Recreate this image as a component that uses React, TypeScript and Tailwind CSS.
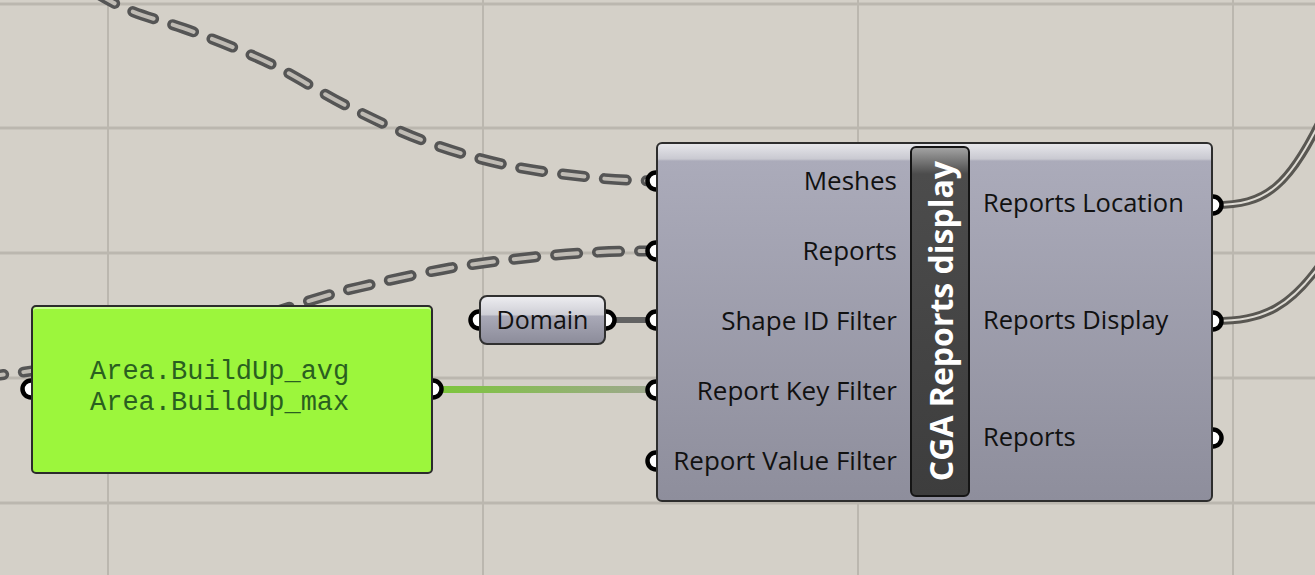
type Pt = [number, number];

// catmull-rom through points -> cubic path
function smooth(pts: Pt[]) {
  let d = `M ${pts[0][0]} ${pts[0][1]}`;
  for (let i = 0; i < pts.length - 1; i++) {
    const p0 = pts[i - 1] || pts[i];
    const p1 = pts[i];
    const p2 = pts[i + 1];
    const p3 = pts[i + 2] || p2;
    const c1x = p1[0] + (p2[0] - p0[0]) / 6;
    const c1y = p1[1] + (p2[1] - p0[1]) / 6;
    const c2x = p2[0] - (p3[0] - p1[0]) / 6;
    const c2y = p2[1] - (p3[1] - p1[1]) / 6;
    d += ` C ${c1x} ${c1y}, ${c2x} ${c2y}, ${p2[0]} ${p2[1]}`;
  }
  return d;
}

const meshesWire = smooth([
  [60, -30],
  [122, 7],
  [194, 32],
  [271, 64],
  [347, 106],
  [427, 142],
  [511, 166],
  [598, 178],
  [651, 181],
]);

const reportsWire = smooth([
  [-60, 382],
  [0, 375],
  [60, 366],
  [190, 338],
  [312, 300],
  [360, 287],
  [450, 268],
  [534, 257],
  [600, 252],
  [651, 251],
]);

const inputs = ["Meshes", "Reports", "Shape ID Filter", "Report Key Filter", "Report Value Filter"];
const outputs = ["Reports Location", "Reports Display", "Reports"];

const grips: Pt[] = [
  [656, 181],
  [656, 251],
  [656, 320],
  [656, 390],
  [656, 461],
  [1213, 205],
  [1213, 321],
  [1213, 438],
  [31, 389],
  [433, 389],
  [479, 320],
  [606, 320],
];

function Wires() {
  return (
    <svg className="absolute inset-0" width={1315} height={575}>
      <defs>
        <linearGradient id="greenWire" x1="0" x2="1" y1="0" y2="0">
          <stop offset="0" stopColor="#7cc63a" />
          <stop offset="1" stopColor="#9ea78e" />
        </linearGradient>
      </defs>
      {/* grid */}
      {[4, 128, 253, 378, 503].map((y) => (
        <rect key={"h" + y} x={0} y={y - 1.5} width={1315} height={3} fill="#bbb7af" />
      ))}
      {[108, 483, 858, 1233].map((x) => (
        <rect key={"v" + x} x={x - 1} y={0} width={2} height={575} fill="#bbb7af" />
      ))}

      {/* dashed wires */}
      {[meshesWire, reportsWire].map((d, i) => (
        <g key={i} fill="none" strokeLinecap="round">
          <path d={d} stroke="#555555" strokeWidth={11} strokeDasharray="22 20" />
          <path d={d} stroke="#bfbbb4" strokeWidth={4} strokeDasharray="22 20" />
        </g>
      ))}

      {/* domain -> shape id */}
      <line x1={606} y1={320} x2={652} y2={320} stroke="#626262" strokeWidth={6} />
      {/* panel -> report key */}
      <rect x={436} y={386} width={216} height={7} fill="url(#greenWire)" />

      {/* output wires */}
      {["M 1214 205 C 1265 205, 1290 190, 1330 100", "M 1214 321 C 1262 321, 1292 310, 1330 250"].map((d) => (
        <g key={d} fill="none">
          <path d={d} stroke="#595752" strokeWidth={8} />
          <path d={d} stroke="#dedbd4" strokeWidth={2} />
        </g>
      ))}

      {grips.map(([x, y]) => (
        <circle key={x + "-" + y} cx={x} cy={y} r={8.5} fill="#ffffff" stroke="#000000" strokeWidth={4.5} />
      ))}
    </svg>
  );
}

export default function App() {
  return (
    <div className="relative w-[1315px] h-[575px] overflow-hidden bg-[#d4d0c8] font-['Open_Sans',sans-serif] text-[#111]">
      <Wires />

      {/* panel */}
      <div className="absolute left-[31px] top-[305px] w-[402px] h-[169px] rounded-[5px] border-2 border-[#2b2b2b] bg-[#9cf63c] shadow-[inset_0_2px_0_#c9ff93] flex items-center pl-[57px] pb-[3px]">
        <div className="font-['Liberation_Mono',monospace] text-[27px] leading-[31px] text-[#2a5f20] whitespace-pre">
          <div>Area.BuildUp_avg</div>
          <div>Area.BuildUp_max</div>
        </div>
      </div>

      {/* domain */}
      <div className="absolute left-[479px] top-[295px] w-[127px] h-[50px] rounded-[8px] border-2 border-[#303030] bg-[linear-gradient(to_bottom,#ececf0_0%,#cfcfd6_38%,#a9a9b7_42%,#8c8c9a_100%)] flex items-center justify-center text-[25px] leading-none pb-[2px]">
        Domain
      </div>

      {/* component */}
      <div className="absolute left-[656px] top-[142px] w-[557px] h-[360px] rounded-[6px] border-2 border-[#2d2d2d] bg-[linear-gradient(to_bottom,#e6e6ea_0px,#c9c9d1_15px,#ababba_17px,#8e8e9c_100%)] flex">
        <div className="w-[252px] flex flex-col pt-[2px] pr-[13px]">
          {inputs.map((t) => (
            <div key={t} className="h-[70px] flex items-center justify-end text-[26px] leading-none pb-[3px]">
              {t}
            </div>
          ))}
        </div>

        <div className="w-[60px] mt-[2px] mb-[3px] rounded-[6px] border-2 border-[#151515] bg-[linear-gradient(to_bottom,#a2a2a2_0px,#4c4c4c_26px,#3d3d3d_100%)] flex items-center justify-center">
          <div className="[writing-mode:vertical-rl] rotate-180 text-white font-bold text-[32px] leading-none whitespace-nowrap pr-[2px]">
            CGA Reports display
          </div>
        </div>

        <div className="flex-1 flex flex-col pt-[2px] pl-[13px]">
          {outputs.map((t) => (
            <div key={t} className="h-[117px] flex items-center text-[25.5px] leading-none pb-[3px]">
              {t}
            </div>
          ))}
        </div>
      </div>
    </div>
  );
}
